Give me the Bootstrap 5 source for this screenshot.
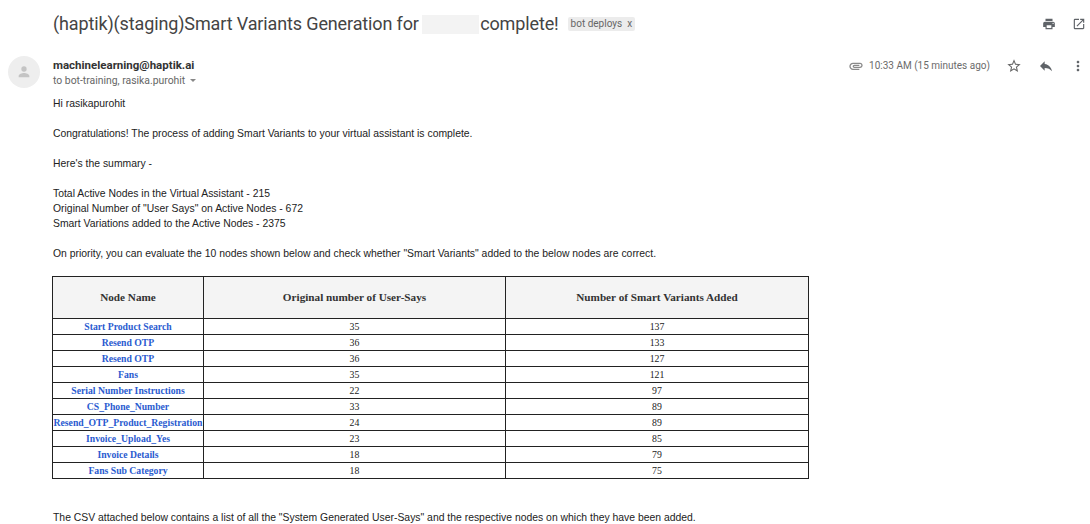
<!DOCTYPE html>
<html lang="en">
<head>
  <meta charset="UTF-8">
  <meta name="viewport" content="width=device-width, initial-scale=1">
  <title>Smart Variants Generation</title>
  <link href="https://cdn.jsdelivr.net/npm/bootstrap@5.3.3/dist/css/bootstrap.min.css" rel="stylesheet">
  <style>
    body { background: #fff; color: #222; font-family: Roboto, "Liberation Sans", sans-serif; overflow: hidden; }
    .mail-wrap { padding: 12px 4px 0 8px; }
    .subject-row { padding-left: 45px; height: 24px; }
    .subject { font-size: 18px; line-height: 24px; color: #444; font-weight: 400; margin: 0; letter-spacing: -.13px; }
    .redacted { display: inline-block; width: 57px; height: 19px; background: #f3f3f3; vertical-align: -4px; margin-left: -1px; margin-right: 1px; }
    .label-chip { font-size: 10px; line-height: 14px; background: #ececec; color: #666; padding: 0 3px; border-radius: 2px; margin-left: 9px; white-space: nowrap; }
    .top-tools { gap: 16px; }
    .head-row { margin-top: 20px; height: 32px; }
    .avatar { width: 32px; height: 32px; border-radius: 50%; background: #eee; margin-right: 13px; flex: none; }
    .sender { font-size: 11.5px; line-height: 16px; font-weight: 700; color: #333; padding-top: 1px; }
    .recipients { font-size: 10.4px; line-height: 14px; color: #666; margin-top: 1px; }
    .caret { display: inline-block; border: 3px solid transparent; border-top-color: #888; border-bottom: 0; margin-left: 5px; vertical-align: 2px; }
    .head-tools { padding-top: 2px; }
    .stamp { font-size: 10px; line-height: 16px; color: #6b6b6b; }
    .mail-body { padding-left: 45px; margin-top: 8px; font-family: "Liberation Sans", Arial, sans-serif; font-size: 10.4px; line-height: 15px; color: #222; }
    .mail-body p { margin: 0 0 15px; }
    .node-table { border-collapse: collapse; width: 756px; font-family: "Liberation Serif", serif; font-size: 9.8px; margin-left: -1px; table-layout: fixed; color: #222; }
    .node-table th, .node-table td { border: 1px solid #222; text-align: center; padding: 0; white-space: nowrap; }
    .node-table th { background: #f4f4f4; height: 42px; font-size: 11.2px; font-weight: 700; color: #333; }
    .node-table td { height: 16px; line-height: 15px; }
    .node-table td:first-child { color: #2a5bd0; font-weight: 700; font-size: 9.7px; }
    .mail-body .csv-note { margin-top: 31px; }
  </style>
</head>
<body>

<div class="mail-wrap">
  <div class="subject-row d-flex align-items-center justify-content-between">
    <div class="d-flex align-items-center">
      <h1 class="subject">(haptik)(staging)Smart Variants Generation for <span class="redacted"></span>complete!</h1>
      <span class="label-chip">bot deploys &nbsp;x</span>
    </div>
    <div class="top-tools d-flex align-items-center">
      <svg width="14" height="14" viewBox="0 0 24 24" fill="#5f6368"><path d="M19 8H5c-1.66 0-3 1.34-3 3v6h4v4h12v-4h4v-6c0-1.66-1.34-3-3-3zm-3 11H8v-5h8v5zm3-7c-.55 0-1-.45-1-1s.45-1 1-1 1 .45 1 1-.45 1-1 1zm-1-9H6v4h12V3z"/></svg>
      <svg width="14" height="14" viewBox="0 0 24 24" fill="#5f6368"><path d="M19 19H5V5h7V3H5a2 2 0 0 0-2 2v14a2 2 0 0 0 2 2h14c1.1 0 2-.9 2-2v-7h-2v7zM14 3v2h3.59l-9.83 9.83 1.41 1.41L19 6.41V10h2V3h-7z"/></svg>
    </div>
  </div>

  <div class="head-row d-flex justify-content-between">
    <div class="d-flex">
      <div class="avatar d-flex align-items-center justify-content-center">
        <svg width="16" height="16" viewBox="0 0 24 24" fill="#c4c4c4"><circle cx="12" cy="7.500" r="4"/><path d="M4 20v-2c0-3 5-4.500 8-4.500s8 1.500 8 4.500v2z"/></svg>
      </div>
      <div>
        <div class="sender">machinelearning@haptik.ai</div>
        <div class="recipients">to bot-training, rasika.purohit<span class="caret"></span></div>
      </div>
    </div>
    <div class="head-tools d-flex align-items-start">
      <svg class="me-1" width="18" height="16" viewBox="0 0 24 24" fill="#8a8a8a"><path d="M2 12.500C2 9.460 4.460 7 7.500 7H18c2.210 0 4 1.790 4 4s-1.790 4-4 4H9.500C8.120 15 7 13.880 7 12.500S8.120 10 9.500 10H17v2H9.410c-.55 0-.55 1 0 1H18c1.100 0 2-.9 2-2s-.9-2-2-2H7.500C5.570 9 4 10.570 4 12.500S5.570 16 7.500 16H17v2H7.500C4.460 18 2 15.540 2 12.500z"/></svg>
      <span class="stamp">10:33 AM (15 minutes ago)</span>
      <svg class="ms-3" width="16" height="16" viewBox="0 0 24 24" fill="#666"><path d="M22 9.240l-7.190-.62L12 2 9.190 8.630 2 9.240l5.460 4.730L5.820 21 12 17.270 18.180 21l-1.630-7.030L22 9.240zM12 15.400l-3.760 2.270 1-4.280-3.320-2.880 4.380-.38L12 6.100l1.710 4.040 4.380.38-3.320 2.880 1 4.280L12 15.400z"/></svg>
      <svg class="ms-3" width="16" height="16" viewBox="0 0 24 24" fill="#5f6368"><path d="M10 9V5l-7 7 7 7v-4.100c5 0 8.500 1.600 11 5.100-1-5-4-10-11-11z"/></svg>
      <svg class="ms-3" width="16" height="16" viewBox="0 0 24 24" fill="#5f6368"><path d="M12 8c1.100 0 2-.9 2-2s-.9-2-2-2-2 .9-2 2 .9 2 2 2zm0 2c-1.100 0-2 .9-2 2s.9 2 2 2 2-.9 2-2-.9-2-2-2zm0 6c-1.100 0-2 .9-2 2s.9 2 2 2 2-.9 2-2-.9-2-2-2z"/></svg>
    </div>
  </div>

  <div class="mail-body">
    <p>Hi rasikapurohit</p>
    <p>Congratulations! The process of adding Smart Variants to your virtual assistant is complete.</p>
    <p>Here's the summary -</p>
    <p>Total Active Nodes in the Virtual Assistant - 215<br>Original Number of "User Says" on Active Nodes - 672<br>Smart Variations added to the Active Nodes - 2375</p>
    <p>On priority, you can evaluate the 10 nodes shown below and check whether "Smart Variants" added to the below nodes are correct.</p>

    <table class="node-table">
      <colgroup><col style="width:151px"><col style="width:302px"><col style="width:303px"></colgroup>
      <thead>
        <tr><th>Node Name</th><th>Original number of User-Says</th><th>Number of Smart Variants Added</th></tr>
      </thead>
      <tbody>
        <tr><td>Start Product Search</td><td>35</td><td>137</td></tr>
        <tr><td>Resend OTP</td><td>36</td><td>133</td></tr>
        <tr><td>Resend OTP</td><td>36</td><td>127</td></tr>
        <tr><td>Fans</td><td>35</td><td>121</td></tr>
        <tr><td>Serial Number Instructions</td><td>22</td><td>97</td></tr>
        <tr><td>CS_Phone_Number</td><td>33</td><td>89</td></tr>
        <tr><td>Resend_OTP_Product_Registration</td><td>24</td><td>89</td></tr>
        <tr><td>Invoice_Upload_Yes</td><td>23</td><td>85</td></tr>
        <tr><td>Invoice Details</td><td>18</td><td>79</td></tr>
        <tr><td>Fans Sub Category</td><td>18</td><td>75</td></tr>
      </tbody>
    </table>

    <p class="csv-note">The CSV attached below contains a list of all the "System Generated User-Says" and the respective nodes on which they have been added.</p>
  </div>
</div>

<script src="https://cdn.jsdelivr.net/npm/bootstrap@5.3.3/dist/js/bootstrap.bundle.min.js"></script>
</body>
</html>
